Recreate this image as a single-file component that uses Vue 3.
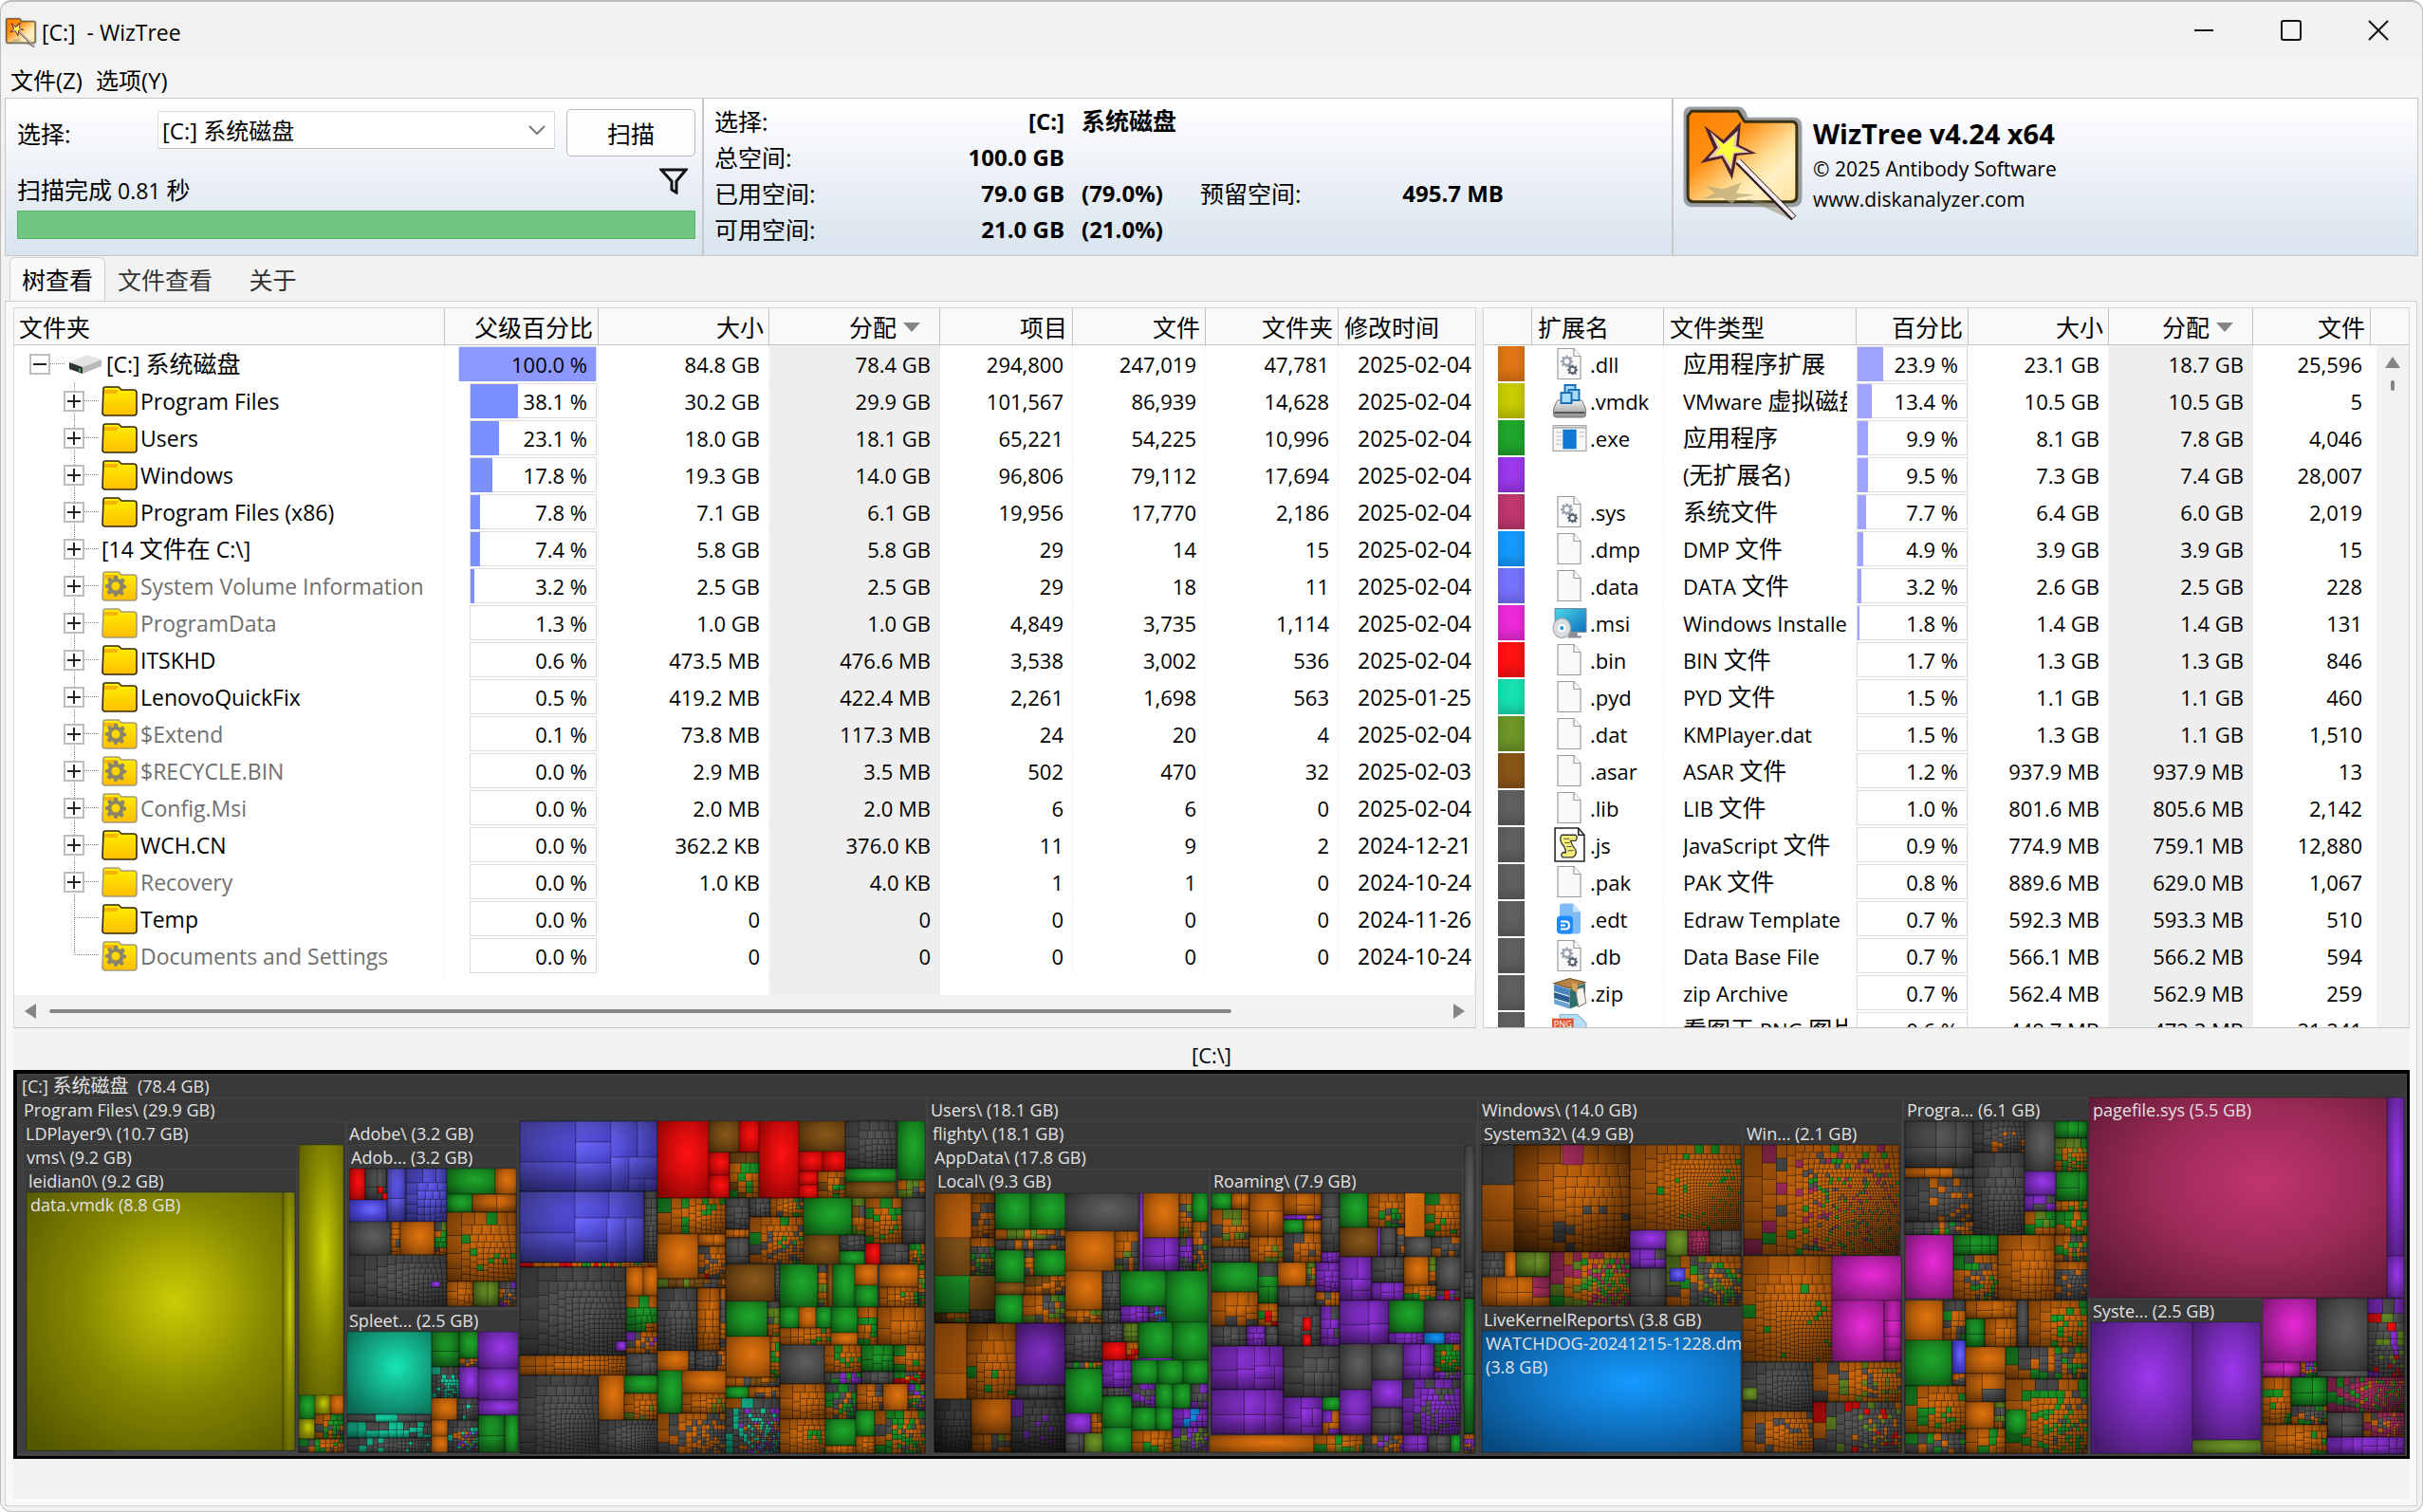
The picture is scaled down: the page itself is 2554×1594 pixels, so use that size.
<script setup>
import { ref, h } from 'vue'

const drive = ref('C')
const activeTab = ref('树查看')
const tabs = ['树查看', '文件查看', '关于']

// Chinese runs are set a little larger than the latin text around them
const Mixed = ({ text }) =>
  text.split(/([\u4e00-\u9fff]+)/).map((part, i) => (i % 2 ? h('span', { class: 'zh' }, part) : part))
Mixed.props = ['text']

const folders = [
  { name: '[C:] 系统磁盘', icon: 'drive', open: true, root: true, pct: 100.0, size: '84.8 GB', alloc: '78.4 GB', items: '294,800', files: '247,019', dirs: '47,781', date: '2025-02-04' },
  { name: 'Program Files', icon: 'folder', pct: 38.1, size: '30.2 GB', alloc: '29.9 GB', items: '101,567', files: '86,939', dirs: '14,628', date: '2025-02-04' },
  { name: 'Users', icon: 'folder', pct: 23.1, size: '18.0 GB', alloc: '18.1 GB', items: '65,221', files: '54,225', dirs: '10,996', date: '2025-02-04' },
  { name: 'Windows', icon: 'folder', pct: 17.8, size: '19.3 GB', alloc: '14.0 GB', items: '96,806', files: '79,112', dirs: '17,694', date: '2025-02-04' },
  { name: 'Program Files (x86)', icon: 'folder', pct: 7.8, size: '7.1 GB', alloc: '6.1 GB', items: '19,956', files: '17,770', dirs: '2,186', date: '2025-02-04' },
  { name: '[14 文件在 C:\\]', icon: '', pct: 7.4, size: '5.8 GB', alloc: '5.8 GB', items: '29', files: '14', dirs: '15', date: '2025-02-04' },
  { name: 'System Volume Information', icon: 'gear', hidden: true, pct: 3.2, size: '2.5 GB', alloc: '2.5 GB', items: '29', files: '18', dirs: '11', date: '2025-02-04' },
  { name: 'ProgramData', icon: 'folder', hidden: true, pct: 1.3, size: '1.0 GB', alloc: '1.0 GB', items: '4,849', files: '3,735', dirs: '1,114', date: '2025-02-04' },
  { name: 'ITSKHD', icon: 'folder', pct: 0.6, size: '473.5 MB', alloc: '476.6 MB', items: '3,538', files: '3,002', dirs: '536', date: '2025-02-04' },
  { name: 'LenovoQuickFix', icon: 'folder', pct: 0.5, size: '419.2 MB', alloc: '422.4 MB', items: '2,261', files: '1,698', dirs: '563', date: '2025-01-25' },
  { name: '$Extend', icon: 'gear', hidden: true, pct: 0.1, size: '73.8 MB', alloc: '117.3 MB', items: '24', files: '20', dirs: '4', date: '2025-02-04' },
  { name: '$RECYCLE.BIN', icon: 'gear', hidden: true, pct: 0, size: '2.9 MB', alloc: '3.5 MB', items: '502', files: '470', dirs: '32', date: '2025-02-03' },
  { name: 'Config.Msi', icon: 'gear', hidden: true, pct: 0, size: '2.0 MB', alloc: '2.0 MB', items: '6', files: '6', dirs: '0', date: '2025-02-04' },
  { name: 'WCH.CN', icon: 'folder', pct: 0, size: '362.2 KB', alloc: '376.0 KB', items: '11', files: '9', dirs: '2', date: '2024-12-21' },
  { name: 'Recovery', icon: 'folder', hidden: true, pct: 0, size: '1.0 KB', alloc: '4.0 KB', items: '1', files: '1', dirs: '0', date: '2024-10-24' },
  { name: 'Temp', icon: 'folder', leaf: true, pct: 0, size: '0', alloc: '0', items: '0', files: '0', dirs: '0', date: '2024-11-26' },
  { name: 'Documents and Settings', icon: 'gear', hidden: true, leaf: true, last: true, pct: 0, size: '0', alloc: '0', items: '0', files: '0', dirs: '0', date: '2024-10-24' }
]

const types = [
  { color: 'o', icon: 'cogs', ext: '.dll', type: '应用程序扩展', pct: 23.9, size: '23.1 GB', alloc: '18.7 GB', files: '25,596' },
  { color: 'y', icon: 'vmdk', ext: '.vmdk', type: 'VMware 虚拟磁盘', pct: 13.4, size: '10.5 GB', alloc: '10.5 GB', files: '5' },
  { color: 'g', icon: 'exe', ext: '.exe', type: '应用程序', pct: 9.9, size: '8.1 GB', alloc: '7.8 GB', files: '4,046' },
  { color: 'p', icon: '', ext: '', type: '(无扩展名)', pct: 9.5, size: '7.3 GB', alloc: '7.4 GB', files: '28,007' },
  { color: 'c', icon: 'cogs', ext: '.sys', type: '系统文件', pct: 7.7, size: '6.4 GB', alloc: '6.0 GB', files: '2,019' },
  { color: 'b', icon: 'doc', ext: '.dmp', type: 'DMP 文件', pct: 4.9, size: '3.9 GB', alloc: '3.9 GB', files: '15' },
  { color: 'd', icon: 'doc', ext: '.data', type: 'DATA 文件', pct: 3.2, size: '2.6 GB', alloc: '2.5 GB', files: '228' },
  { color: 'm', icon: 'msi', ext: '.msi', type: 'Windows Installer', pct: 1.8, size: '1.4 GB', alloc: '1.4 GB', files: '131' },
  { color: 'r', icon: 'doc', ext: '.bin', type: 'BIN 文件', pct: 1.7, size: '1.3 GB', alloc: '1.3 GB', files: '846' },
  { color: 't', icon: 'doc', ext: '.pyd', type: 'PYD 文件', pct: 1.5, size: '1.1 GB', alloc: '1.1 GB', files: '460' },
  { color: 'l', icon: 'doc', ext: '.dat', type: 'KMPlayer.dat', pct: 1.5, size: '1.3 GB', alloc: '1.1 GB', files: '1,510' },
  { color: 'n', icon: 'doc', ext: '.asar', type: 'ASAR 文件', pct: 1.2, size: '937.9 MB', alloc: '937.9 MB', files: '13' },
  { color: 'k', icon: 'doc', ext: '.lib', type: 'LIB 文件', pct: 1.0, size: '801.6 MB', alloc: '805.6 MB', files: '2,142' },
  { color: 'k', icon: 'js', ext: '.js', type: 'JavaScript 文件', pct: 0.9, size: '774.9 MB', alloc: '759.1 MB', files: '12,880' },
  { color: 'k', icon: 'doc', ext: '.pak', type: 'PAK 文件', pct: 0.8, size: '889.6 MB', alloc: '629.0 MB', files: '1,067' },
  { color: 'k', icon: 'edt', ext: '.edt', type: 'Edraw Template', pct: 0.7, size: '592.3 MB', alloc: '593.3 MB', files: '510' },
  { color: 'k', icon: 'cogs', ext: '.db', type: 'Data Base File', pct: 0.7, size: '566.1 MB', alloc: '566.2 MB', files: '594' },
  { color: 'k', icon: 'zip', ext: '.zip', type: 'zip Archive', pct: 0.7, size: '562.4 MB', alloc: '562.9 MB', files: '259' },
  { color: 'k', icon: 'png', ext: '.png', type: '看图王 PNG 图片', pct: 0.6, size: '448.7 MB', alloc: '472.3 MB', files: '21,241' }
]

const barWidth = (pct) => (pct < 1.8 ? 0 : pct) + '%'

// ---- treemap ----
// colour key: [bright centre, middle, edge]
const colors = {
  y: ['#c9cd04', '#858700', '#565800'],
  o: ['#e0740f', '#b65c0a', '#703a06'],
  g: ['#1fa82b', '#178421', '#0b4c11'],
  p: ['#9c37ee', '#7229b0', '#45196b'],
  c: ['#c0356c', '#9a2a57', '#5c1933'],
  b: ['#149aff', '#0f74c4', '#084a80'],
  d: ['#6f6aff', '#4641cc', '#2d2a86'],
  m: ['#ea2ad8', '#b01fa3', '#711568'],
  r: ['#ff1212', '#cc0a0a', '#830404'],
  t: ['#18e6b4', '#12a582', '#0a6450'],
  l: ['#6e9727', '#58791f', '#374c13'],
  n: ['#8a581a', '#6c4412', '#43290a'],
  k: ['#606060', '#484848', '#2a2a2a']
}

// one file: [colour, x, y, w, h]; many files: [colour mix, x, y, w, h, count]
// a count of 0 is a file lit by the cushion of its folder, an empty mix is that cushion
const blocks = [
  // Program Files / LDPlayer9
  ['y', 14, 129, 270, 272], ['y', 284, 129, 13, 272], ['y', 301, 79, 47, 264],
  ['g', 301, 343, 17, 25], ['y', 318, 343, 16, 20], ['o', 334, 343, 14, 20], ['y', 301, 368, 17, 21],
  ['ooggk', 318, 363, 30, 26, 24], ['oookg', 301, 389, 47, 14, 24],
  // Adobe
  ['r', 354, 104, 17, 33], ['k', 371, 104, 23, 33, 4], ['r', 384, 123, 6, 7], ['r', 389, 130, 5, 7], ['d', 354, 137, 40, 23], ['d', 394, 104, 20, 56, 2],
  ['d', 414, 104, 43, 56, 30], ['k', 354, 160, 44, 36], ['oook', 398, 160, 10, 36, 8], ['o', 408, 160, 36, 35],
  ['oklg', 444, 160, 13, 35, 14], ['k', 354, 195, 103, 54, 110], ['p', 440, 223, 10, 6],
  ['g', 457, 104, 51, 27], ['o', 508, 104, 22, 27], ['g', 457, 131, 27, 19], ['o', 484, 131, 46, 19, 2],
  ['ooooooooooooooooooog', 457, 150, 73, 73, 90], ['o', 457, 223, 28, 26, 12], ['l', 485, 223, 27, 26, 2], ['kkkop', 512, 223, 18, 26, 24],
  // Spleeter
  ['t', 352, 276, 89, 87], ['kt', 352, 363, 89, 9, 4], ['ttttk', 352, 371, 89, 17, 22], ['kkkkkkkt', 352, 388, 89, 15, 70],
  ['g', 441, 276, 29, 37, 2], ['g', 470, 276, 20, 28], ['ook', 470, 304, 20, 9, 10], ['p', 490, 276, 42, 39],
  ['tttkk', 441, 313, 29, 33, 60], ['p', 470, 313, 20, 33], ['p', 490, 315, 42, 33], ['p', 490, 348, 42, 16],
  ['g', 490, 364, 28, 39, 2], ['g', 518, 364, 14, 39], ['o', 441, 346, 27, 23], ['o', 441, 369, 17, 17],
  ['o', 441, 386, 17, 17], ['kkkktop', 458, 369, 32, 34, 70], ['kkkt', 468, 346, 22, 23, 24],
  // remaining Program Files
  ['d', 534, 54, 59, 43, 0], ['d', 534, 97, 59, 31, 0], ['d', 593, 54, 37, 22, 0], ['d', 593, 76, 37, 22, 0], ['d', 593, 98, 37, 30, 0],
  ['d', 630, 54, 28, 38, 0], ['d', 658, 54, 21, 38, 0], ['d', 630, 92, 19, 36, 0], ['d', 649, 92, 30, 23, 0], ['d', 649, 115, 17, 13, 0],
  ['d', 666, 115, 13, 13, 0], ['d', 534, 128, 58, 44, 0], ['d', 534, 172, 58, 31, 0], ['d', 592, 128, 36, 28, 0], ['d', 592, 156, 34, 25, 0],
  ['d', 592, 181, 34, 22, 0], ['d', 628, 128, 37, 28, 0], ['d', 626, 156, 20, 47, 0], ['d', 646, 156, 19, 47, 0],
  ['', 534, 54, 145, 74], ['', 534, 128, 131, 75], ['k', 665, 128, 14, 75, 40],
  ['oooorg', 534, 203, 145, 5, 40], ['k', 534, 208, 112, 93, 180], ['p', 635, 286, 11, 10],
  ['o', 646, 208, 18, 30], ['o', 664, 208, 15, 30], ['gggo', 646, 238, 33, 38, 18], ['oookp', 646, 276, 33, 23, 24],
  ['o', 534, 301, 112, 21, 60], ['k', 646, 299, 33, 23, 5], ['k', 534, 322, 83, 82, 160], ['o', 617, 322, 27, 47],
  ['g', 644, 322, 35, 19], ['ooool', 644, 341, 35, 28, 24], ['k', 617, 369, 62, 35, 110],
  ['r', 679, 54, 54, 81], ['n', 733, 54, 32, 33], ['r', 765, 54, 21, 33], ['r', 733, 87, 22, 24], ['r', 733, 111, 22, 24],
  ['ooonng', 755, 87, 31, 48, 20], ['r', 786, 54, 42, 81], ['n', 828, 54, 49, 32], ['r', 828, 86, 25, 21], ['r', 853, 86, 24, 21],
  ['r', 828, 107, 20, 14], ['r', 828, 121, 20, 14], ['oong', 848, 107, 29, 28, 16],
  ['k', 877, 54, 54, 50, 50], ['g', 877, 104, 53, 14], ['n', 877, 118, 53, 17], ['g', 932, 54, 29, 62], ['oolk', 932, 116, 29, 19, 10],
  ['oooooooog', 679, 135, 72, 38, 60], ['o', 679, 173, 43, 47], ['o', 722, 173, 29, 13, 2], ['ooookkr', 722, 186, 29, 34, 40],
  ['lokn', 679, 220, 72, 10, 14], ['k', 751, 135, 25, 33, 14], ['o', 751, 168, 25, 9, 4], ['k', 751, 177, 25, 27, 3],
  ['k', 776, 135, 22, 20, 12], ['ooooookg', 798, 135, 35, 20, 30], ['ooooookkg', 776, 155, 57, 49, 90],
  ['g', 833, 135, 51, 39], ['n', 833, 174, 38, 31], ['ooknl', 884, 135, 14, 39, 8], ['k', 871, 174, 27, 17, 12], ['g', 871, 191, 26, 14],
  ['ooooooog', 898, 135, 39, 48, 46], ['r', 898, 183, 16, 22], ['k', 914, 183, 30, 22, 5], ['k', 937, 135, 24, 48, 5], ['ooookg', 944, 183, 17, 22, 20],
  ['n', 751, 205, 52, 39], ['k', 803, 205, 5, 39, 14], ['g', 808, 205, 40, 45], ['olko', 848, 205, 10, 45, 10], ['n', 858, 205, 6, 45],
  ['g', 864, 205, 23, 45], ['o', 887, 205, 24, 22], ['g', 887, 227, 24, 23], ['o', 913, 205, 41, 24], ['ooooog', 913, 229, 41, 21, 26],
  ['olkg', 954, 205, 7, 45, 20], ['g', 751, 244, 44, 37], ['olko', 795, 244, 13, 37, 10], ['g', 808, 250, 20, 22],
  ['o', 828, 250, 18, 22], ['g', 846, 250, 16, 22], ['oooog', 808, 272, 54, 18, 24], ['g', 862, 250, 28, 27], ['o', 862, 277, 28, 13],
  ['ooog', 890, 250, 21, 40, 14], ['oooooog', 911, 250, 50, 40, 14], ['o', 751, 281, 47, 43], ['ooog', 798, 281, 10, 43, 16],
  ['k', 808, 290, 47, 41], ['oooog', 855, 290, 39, 29, 30], ['g', 894, 290, 34, 28, 9], ['oooog', 928, 290, 33, 28, 14],
  ['kpgk', 855, 319, 39, 12, 12], ['k', 894, 318, 34, 13, 5], ['okgr', 928, 318, 33, 13, 24],
  ['k', 679, 230, 42, 66, 60], ['o', 721, 230, 24, 66, 26], ['ko', 745, 230, 6, 66, 10], ['o', 679, 296, 33, 21], ['gk', 712, 296, 7, 21, 5],
  ['k', 719, 296, 23, 21, 14], ['oko', 742, 296, 9, 21, 8], ['g', 679, 317, 26, 45], ['o', 705, 317, 46, 24], ['ooool', 705, 341, 46, 21, 24],
  ['ookkko', 679, 362, 72, 42, 90], ['lnok', 751, 324, 57, 10, 10], ['g', 751, 334, 24, 12], ['ook', 775, 334, 33, 12, 8],
  ['kkkkkttkpo', 751, 346, 57, 58, 220], ['o', 808, 331, 48, 37, 26], ['kgok', 856, 331, 33, 37, 36], ['ook', 889, 331, 28, 28, 14],
  ['o', 917, 331, 26, 28], ['gokp', 943, 331, 18, 28, 30], ['ooog', 808, 368, 48, 36, 50], ['g', 856, 368, 32, 28], ['o', 856, 396, 32, 8, 8],
  ['g', 888, 359, 20, 27], ['gggooko', 908, 359, 53, 45, 80], ['o', 888, 386, 20, 18, 9],
  // Users / Local
  ['o', 971, 130, 39, 47, 0], ['ooook', 1010, 130, 25, 47, 22], ['n', 971, 177, 38, 40, 0], ['oklkg', 1009, 177, 26, 40, 40],
  ['g', 971, 217, 37, 39, 0], ['n', 1008, 217, 27, 36, 0], ['oonl', 971, 256, 38, 11, 10], ['k', 1008, 253, 27, 14, 10],
  ['', 971, 130, 64, 137],
  ['g', 1035, 130, 37, 38], ['g', 1072, 130, 37, 38], ['oolk', 1035, 168, 74, 11, 12], ['kkko', 1035, 179, 74, 11, 14],
  ['g', 1035, 190, 31, 34], ['ook', 1066, 190, 10, 27, 5], ['g', 1076, 190, 33, 27], ['n', 1035, 224, 31, 13], ['ookn', 1066, 217, 43, 20, 16],
  ['g', 1035, 237, 29, 30], ['oolkg', 1064, 237, 45, 30, 24], ['k', 1109, 130, 77, 40], ['o', 1109, 170, 52, 42], ['oolk', 1161, 170, 25, 42, 16],
  ['p', 1187, 130, 4, 82], ['o', 1191, 130, 38, 47], ['oolk', 1229, 130, 14, 47, 18], ['g', 1243, 130, 16, 30], ['oogk', 1243, 160, 16, 52, 30],
  ['p', 1191, 177, 38, 35, 4], ['pk', 1229, 177, 14, 35, 18], ['o', 1109, 212, 39, 41], ['k', 1148, 212, 19, 41, 12],
  ['g', 1167, 212, 48, 37], ['g', 1215, 212, 44, 54], ['p', 1167, 249, 30, 17, 10], ['kkpb', 1197, 249, 18, 17, 18],
  ['oonl', 1109, 253, 39, 14, 12], ['k', 1148, 253, 19, 14, 9], ['o', 971, 267, 34, 53, 0], ['o', 971, 320, 34, 27, 0],
  ['ooooooooooog', 1005, 267, 52, 80, 44], ['p', 1057, 267, 52, 65], ['k', 1057, 332, 52, 15, 6],
  ['k', 971, 347, 39, 56, 50], ['o', 1010, 347, 42, 37], ['lok', 1010, 384, 42, 19, 12], ['kkkkkkkp', 1052, 347, 57, 56, 80],
  ['', 971, 267, 138, 136],
  ['k', 1109, 267, 39, 41, 26], ['gok', 1109, 308, 39, 7, 8], ['g', 1109, 315, 39, 47], ['p', 1109, 362, 27, 21], ['oon', 1136, 362, 12, 21, 6],
  ['k', 1109, 383, 20, 20, 3], ['l', 1129, 383, 19, 20], ['k', 1148, 267, 22, 20, 9], ['l', 1170, 267, 16, 20, 6], ['g', 1186, 266, 36, 38],
  ['g', 1222, 266, 37, 40], ['r', 1148, 287, 25, 19], ['rko', 1173, 287, 13, 19, 8], ['p', 1186, 304, 36, 2], ['p', 1148, 306, 31, 29, 8],
  ['g', 1179, 306, 27, 25], ['g', 1206, 306, 27, 25], ['g', 1233, 306, 26, 25], ['kpk', 1148, 335, 31, 9, 12],
  ['g', 1148, 344, 31, 33], ['g', 1148, 377, 31, 26], ['kkp', 1179, 331, 25, 25, 16], ['g', 1204, 331, 18, 26], ['g', 1222, 331, 19, 26],
  ['kkp', 1241, 331, 18, 26, 8], ['g', 1179, 356, 25, 24], ['g', 1204, 356, 18, 24], ['pppbk', 1222, 357, 37, 20, 12],
  ['oog', 1179, 380, 43, 23, 14], ['kkpl', 1222, 377, 37, 26, 40],
  // Users / Roaming
  ['g', 1263, 130, 21, 17], ['o', 1284, 130, 19, 17, 2], ['ooookl', 1263, 147, 40, 40, 24], ['o', 1303, 130, 36, 46, 3],
  ['ooool', 1303, 176, 36, 27, 16], ['k', 1263, 187, 40, 16, 10], ['o', 1339, 130, 40, 23, 4], ['pop', 1339, 153, 40, 5, 4], ['g', 1339, 158, 21, 14],
  ['o', 1360, 158, 19, 14, 2], ['ooook', 1339, 172, 40, 31, 16], ['k', 1379, 130, 19, 62, 7], ['p', 1379, 192, 19, 11, 9],
  ['g', 1263, 203, 49, 31], ['gkg', 1312, 203, 21, 43, 4], ['o', 1333, 203, 30, 25], ['olk', 1363, 203, 10, 25, 8], ['p', 1373, 203, 25, 31, 14],
  ['oooook', 1263, 234, 49, 36, 12], ['ooogr', 1312, 246, 21, 24, 10], ['k', 1333, 228, 40, 21, 5], ['oook', 1373, 234, 25, 15, 8],
  ['k', 1333, 249, 45, 42, 16], ['r', 1359, 261, 9, 14], ['r', 1359, 279, 9, 12], ['pppk', 1378, 249, 20, 42, 10],
  ['k', 1263, 270, 37, 21, 10], ['p', 1300, 270, 20, 21, 9], ['k', 1320, 270, 13, 21, 3], ['p', 1263, 291, 76, 46, 9],
  ['p', 1263, 337, 76, 47, 6], ['k', 1339, 291, 59, 54, 16], ['p', 1339, 345, 41, 39, 6], ['g', 1380, 345, 18, 14], ['ogp', 1380, 359, 18, 25, 5],
  ['g', 1398, 130, 30, 36], ['oookg', 1428, 130, 39, 36, 24], ['n', 1398, 166, 40, 31], ['p', 1438, 166, 3, 31], ['k', 1441, 166, 17, 31, 2],
  ['ook', 1458, 166, 9, 31, 6], ['o', 1467, 130, 21, 46, 0], ['oooog', 1488, 130, 37, 46, 30], ['k', 1467, 176, 28, 21], ['kko', 1495, 176, 30, 21, 10],
  ['p', 1398, 197, 34, 46, 5], ['k', 1432, 197, 34, 27, 7], ['p', 1432, 224, 34, 19, 5], ['o', 1466, 197, 26, 30], ['lok', 1492, 197, 8, 30, 5],
  ['ooog', 1466, 227, 34, 16, 14], ['k', 1500, 197, 25, 35], ['krkp', 1500, 232, 25, 11, 10], ['p', 1398, 243, 52, 46, 4],
  ['g', 1450, 243, 37, 34], ['k', 1487, 243, 38, 34], ['p', 1450, 277, 37, 12, 10], ['b', 1487, 277, 22, 12], ['p', 1509, 277, 16, 12, 10],
  ['k', 1398, 289, 34, 48], ['k', 1432, 289, 33, 38], ['p', 1465, 289, 33, 37, 4], ['gggo', 1498, 289, 27, 29, 36],
  ['kp', 1498, 318, 27, 8, 12], ['pppkkp', 1464, 326, 61, 58, 110], ['p', 1398, 337, 34, 47, 2], ['p', 1432, 327, 32, 29], ['k', 1432, 356, 32, 28, 4],
  ['o', 1261, 385, 110, 18], ['oolog', 1371, 385, 52, 18, 16], ['pko', 1423, 385, 42, 18, 24], ['p', 1465, 385, 26, 18, 4],
  ['k', 1491, 385, 24, 18, 3], ['g', 1515, 385, 10, 18], ['k', 1529, 80, 11, 133], ['k', 1529, 213, 11, 28, 7], ['g', 1529, 241, 11, 142, 2], ['pko', 1529, 384, 11, 20, 16],
  // Windows
  ['k', 1548, 79, 34, 42, 0], ['o', 1548, 121, 34, 38, 0], ['o', 1548, 159, 34, 33, 0], ['oooooooooook', 1582, 79, 122, 113, 100], ['c', 1633, 79, 22, 21, 0],
  ['', 1548, 79, 156, 113],
  ['oooooooooooooog', 1704, 79, 117, 90, 600], ['p', 1704, 169, 38, 20], ['ppk', 1704, 189, 38, 20, 5], ['l', 1742, 169, 23, 27],
  ['c', 1765, 169, 23, 27, 30], ['k', 1788, 169, 33, 27, 8], ['k', 1548, 192, 24, 36, 18], ['o', 1572, 192, 12, 36], ['l', 1584, 192, 36, 26, 2],
  ['ooooc', 1548, 218, 72, 31, 8], ['oclgoc', 1620, 192, 84, 57, 170], ['kkolgo', 1742, 196, 79, 53, 120], ['k', 1704, 209, 38, 40, 3], ['d', 1746, 209, 16, 14],
  ['b', 1548, 275, 273, 128], ['oooooooooogck', 1824, 79, 164, 116, 1100],
  ['ooooooooooooooooog', 1823, 196, 94, 112, 260], ['m', 1917, 196, 73, 47], ['m', 1917, 243, 55, 64], ['m', 1972, 243, 18, 64, 4],
  ['k', 1823, 308, 74, 52, 110], ['l', 1823, 335, 15, 13], ['oooookl', 1897, 308, 93, 42, 100], ['kkkkkorl', 1897, 350, 93, 53, 140], ['ooooook', 1823, 360, 74, 43, 80],
  // Program Files (x86)
  ['k', 1994, 54, 72, 49, 6], ['oko', 1994, 103, 72, 11, 5], ['kkkkkkko', 1994, 114, 72, 46, 60], ['kokg', 1994, 160, 72, 14, 26],
  ['kkkkko', 2066, 54, 54, 33, 60], ['kkkkkkk', 2066, 87, 54, 87, 90], ['k', 2120, 54, 32, 53], ['g', 2152, 54, 34, 18, 3],
  ['oolg', 2152, 72, 34, 35, 40], ['p', 2120, 107, 33, 25], ['ppk', 2120, 132, 33, 17, 5], ['g', 2153, 107, 33, 31, 3], ['oog', 2153, 138, 33, 11, 12],
  ['ooolg', 2120, 149, 33, 25, 10], ['ggoo', 2153, 149, 33, 25, 14], ['m', 1994, 174, 51, 67], ['g', 2045, 174, 47, 21, 8],
  ['oookg', 2045, 195, 47, 47, 60], ['o', 2092, 174, 60, 68, 40], ['okgo', 2152, 174, 34, 28, 30], ['kkkko', 2152, 202, 34, 40, 50],
  ['o', 1994, 243, 40, 42], ['kogo', 2034, 243, 24, 42, 16], ['g', 1994, 285, 49, 48], ['d', 2044, 285, 14, 35], ['oko', 2044, 320, 14, 13, 5],
  ['ooooog', 1994, 333, 64, 50, 60], ['gkko', 1994, 383, 64, 21, 24], ['g', 2058, 262, 20, 30, 2], ['o', 2058, 243, 54, 19, 8],
  ['o', 2078, 262, 34, 30, 10], ['k', 2112, 243, 12, 49, 2], ['oooooog', 2124, 243, 62, 49, 60], ['o', 2058, 292, 42, 28], ['kooo', 2058, 320, 42, 30, 3],
  ['kkoog', 2100, 292, 86, 34, 50], ['o', 2058, 350, 30, 28], ['olk', 2088, 350, 12, 28, 8], ['ooog', 2058, 378, 42, 26, 12],
  ['oogokg', 2100, 326, 86, 78, 170], ['g', 2100, 358, 22, 26],
  // files in C:\ and System Volume Information
  ['c', 2188, 29, 314, 211], ['p', 2502, 29, 18, 167], ['p', 2502, 196, 18, 44], ['p', 2190, 266, 107, 138], ['p', 2297, 266, 72, 124], ['l', 2297, 390, 72, 14],
  ['m', 2371, 241, 57, 67], ['m', 2371, 308, 40, 16, 2], ['gpo', 2411, 308, 17, 16, 20], ['k', 2428, 241, 54, 76], ['k', 2428, 317, 54, 7],
  ['kkkkkkrlp', 2482, 241, 38, 83, 70], ['ooog', 2371, 324, 30, 49, 30], ['g', 2401, 324, 38, 30, 4], ['kkog', 2401, 354, 38, 20, 30],
  ['ccccogk', 2439, 324, 81, 37, 260], ['k', 2439, 361, 38, 26, 3], ['ccko', 2477, 361, 43, 26, 60], ['ooooog', 2371, 374, 68, 31, 30], ['p', 2439, 387, 81, 18, 10]
]

let seed = 7
function random() {
  seed = (seed * 16807) % 2147483647
  return seed / 2147483647
}

// worst aspect ratio of a row of areas laid along a side
function worst(row, sum, side) {
  const s2 = sum * sum
  return Math.max((side * side * row[0]) / s2, s2 / (side * side * row[row.length - 1]))
}

// squarified layout, biggest file first
function squarify(mix, x, y, w, h, count) {
  const sizes = Array.from({ length: count }, (_, i) => 1 / Math.pow(i + 3, 0.85))
  const total = sizes.reduce((a, b) => a + b, 0)
  const areas = sizes.map((s) => (s / total) * w * h)
  const out = []
  let i = 0
  while (i < areas.length) {
    const side = Math.min(w, h)
    const row = [areas[i]]
    let sum = areas[i++]
    while (i < areas.length) {
      const next = [...row, areas[i]]
      if (worst(next, sum + areas[i], side) > worst(row, sum, side)) break
      row.push(areas[i])
      sum += areas[i++]
    }
    const depth = sum / side
    let pos = 0
    for (const a of row) {
      const len = a / depth
      const c = 'flat-' + mix[Math.floor(random() * mix.length)]
      out.push(w >= h ? { c, x, y: y + pos, w: depth, h: len } : { c, x: x + pos, y, w: len, h: depth })
      pos += len
    }
    if (w >= h) {
      x += depth
      w -= depth
    } else {
      y += depth
      h -= depth
    }
  }
  return out
}

const tiles = []
for (const [mix, x, y, w, h, count] of blocks) {
  if (!mix) {
    tiles.push({ c: 'cushion', x, y, w, h })
  } else if (count) {
    tiles.push(...squarify(mix, x, y, w, h, count))
    tiles.push({ c: 'cushion', x, y, w, h })
  } else {
    tiles.push({ c: (count === 0 ? 'flat-' : 'tile-') + mix, x, y, w, h })
  }
}

// folder frames behind the tiles
const frames = [
  [4, 4, 2518, 402], [6, 29, 956, 376], [8, 54, 342, 350], [10, 79, 289, 324], [12, 104, 286, 298],
  [351, 54, 182, 197], [353, 79, 178, 171], [351, 252, 182, 152],
  [963, 29, 580, 376], [965, 54, 577, 350], [967, 79, 561, 325], [969, 104, 291, 299], [1261, 104, 266, 280],
  [1544, 29, 447, 376], [1546, 54, 276, 196], [1822, 54, 168, 142], [1546, 250, 276, 154], [1992, 29, 195, 376], [2188, 241, 182, 164]
]

const labels = [
  ['[C:] 系统磁盘  (78.4 GB)', 9, 24], ['Program Files\\ (29.9 GB)', 11, 49], ['LDPlayer9\\ (10.7 GB)', 13, 74],
  ['vms\\ (9.2 GB)', 14, 99], ['leidian0\\ (9.2 GB)', 16, 124], ['data.vmdk (8.8 GB)', 18, 149],
  ['Adobe\\ (3.2 GB)', 354, 74], ['Adob... (3.2 GB)', 356, 99], ['Spleet... (2.5 GB)', 354, 271],
  ['Users\\ (18.1 GB)', 967, 49], ['flighty\\ (18.1 GB)', 969, 74], ['AppData\\ (17.8 GB)', 971, 99],
  ['Local\\ (9.3 GB)', 974, 124], ['Roaming\\ (7.9 GB)', 1265, 124],
  ['Windows\\ (14.0 GB)', 1548, 49], ['System32\\ (4.9 GB)', 1550, 74], ['Win... (2.1 GB)', 1827, 74],
  ['LiveKernelReports\\ (3.8 GB)', 1550, 270], ['WATCHDOG-20241215-1228.dm', 1552, 295], ['(3.8 GB)', 1552, 320],
  ['Progra... (6.1 GB)', 1996, 49], ['pagefile.sys (5.5 GB)', 2192, 49], ['Syste... (2.5 GB)', 2192, 261]
]
const labelParts = (text) => text.split(/([\u4e00-\u9fff]+)/)
</script>

<template>
  <div class="window">
    <!-- shared shapes -->
    <svg class="defs" aria-hidden="true">
      <defs>
        <linearGradient id="folderFill" x1="0" y1="0" x2="0" y2="1">
          <stop offset="0" stop-color="#fff000" />
          <stop offset="1" stop-color="#ffbe00" />
        </linearGradient>
        <linearGradient id="logoFill" x1="0" y1="0" x2="1" y2="1">
          <stop offset="0" stop-color="#ff8000" />
          <stop offset="0.35" stop-color="#ff9014" />
          <stop offset="0.62" stop-color="#ffe09a" />
          <stop offset="0.75" stop-color="#fff1c4" />
          <stop offset="1" stop-color="#ffdf9a" />
        </linearGradient>
        <linearGradient id="screenFill" x1="0" y1="0" x2="1" y2="1">
          <stop offset="0" stop-color="#4fd6e6" />
          <stop offset="1" stop-color="#0a6fc0" />
        </linearGradient>
        <linearGradient id="metalFill" x1="0" y1="0" x2="0" y2="1">
          <stop offset="0" stop-color="#f2f2f2" />
          <stop offset="1" stop-color="#8d8d8d" />
        </linearGradient>
        <symbol id="logo" viewBox="0 0 126 120">
          <path d="M8 5 H58 Q63 5 65 12 L67 16 H116 Q122 16 122 23 V97 Q122 104 115 104 H11 Q4 104 4 97 V11 Q4 5 8 5Z" fill="#6c7174" stroke="#9a9ea1" stroke-width="5" />
          <path d="M10 7 H58 L65 18 H114 Q119 18 119 24 V95 Q119 101 113 101 H12 Q6 101 6 95 V12Z" fill="url(#logoFill)" stroke="#3a3112" stroke-width="3" />
          <path d="M24 84 L42 88 L62 81 L56 92 L76 94 L58 97 L52 103 L42 97 L22 98 L34 92Z" fill="#b7a577" opacity="0.7" />
          <path d="M66 98 L112 119 L104 104Z" fill="#8f8566" opacity="0.5" />
          <path d="M58 59 L116 118" stroke="#2c1a22" stroke-width="7" />
          <path d="M58 58 L116 117" stroke="#f5ecee" stroke-width="4" />
          <path d="M23 22 L43 37 L61 18 L59 42 L77 51 L57 53 L52 78 L41 56 L19 61 L33 46Z" fill="#4a2430" />
          <path d="M29 28 L43 41 L58 27 L56 43 L70 50 L54 51 L51 68 L42 53 L27 56 L37 45Z" fill="#eec7b4" />
          <path d="M34 34 L44 42 L55 32 L53 44 L64 49 L53 50 L50 62 L43 51 L33 53 L40 45Z" fill="#fbff3c" />
        </symbol>
        <symbol id="folder" viewBox="0 0 38 32">
          <path d="M2 3 Q2 1 4 1 H18 L21 4 H34 Q37 4 37 7 V28 Q37 31 34 31 H4 Q1 31 1 28Z" fill="url(#folderFill)" stroke="currentColor" stroke-width="1.6" />
          <path d="M3 4 H18 L16 8 H3Z" fill="#f5b400" />
        </symbol>
        <symbol id="gear" viewBox="0 0 22 22">
          <path d="M9 0h4l.6 3.2 2 .8 2.700-1.800 2.500 2.700-1.800 2.600.8 2L22 10v3l-3 .8-.8 2 1.700 2.600-2.600 2.500-2.600-1.800-2 .8L12.500 22h-3l-.8-3-2-.8-2.600 1.700-2.500-2.600 1.800-2.600-.8-2L0 12.500v-3l3-.8.8-2-1.700-2.600 2.600-2.500L7.200 4l1.600-.8zM11 6.500a4.500 4.500 0 1 0 0 9a4.500 4.500 0 1 0 0-9z" fill-rule="evenodd" fill="currentColor" />
        </symbol>
        <symbol id="page" viewBox="0 0 26 34">
          <path d="M1 1 H18 L25 9 V33 H1Z" fill="#fafafa" stroke="#9a9a9a" stroke-width="1.2" />
          <path d="M18 1 V9 H25" fill="#fff" stroke="#9a9a9a" stroke-width="1.2" />
        </symbol>
      </defs>
    </svg>

    <header class="titlebar">
      <svg class="app-icon"><use href="#logo" /></svg>
      <span class="title">[C:]&nbsp; - WizTree</span>
      <div class="controls">
        <button aria-label="最小化"><svg viewBox="0 0 22 22"><path d="M1 11h20" /></svg></button>
        <button aria-label="最大化"><svg viewBox="0 0 22 22"><rect x="1" y="1" width="20" height="20" rx="2" /></svg></button>
        <button aria-label="关闭"><svg viewBox="0 0 22 22"><path d="M1 1l20 20M21 1L1 21" /></svg></button>
      </div>
    </header>

    <nav class="menubar">
      <button>文件(Z)</button>
      <button>选项(Y)</button>
    </nav>

    <section class="toolbar">
      <div class="panel scan-panel">
        <div class="scan-row">
          <label for="drive">选择:</label>
          <div class="drive-box">
            <select id="drive" v-model="drive">
              <option value="C">[C:] 系统磁盘</option>
            </select>
            <svg viewBox="0 0 18 10"><path d="M1 1l8 8 8-8" /></svg>
          </div>
          <button class="scan">扫描</button>
        </div>
        <div class="status-row">
          <label for="progress"><Mixed text="扫描完成 0.81 秒" /></label>
          <button class="filter" aria-label="过滤">
            <svg viewBox="0 0 30 28"><path d="M2 2h26L18 14v12l-5-3v-9z" /></svg>
          </button>
        </div>
        <progress id="progress" value="100" max="100"></progress>
      </div>

      <div class="panel info-panel">
        <span>选择:</span><b>[C:]</b><b><Mixed text="系统磁盘" /></b><span></span><b></b>
        <span>总空间:</span><b>100.0 GB</b><b></b><span></span><b></b>
        <span>已用空间:</span><b>79.0 GB</b><b>(79.0%)</b><span>预留空间:</span><b>495.7 MB</b>
        <span>可用空间:</span><b>21.0 GB</b><b>(21.0%)</b><span></span><b></b>
      </div>

      <div class="panel about-panel">
        <svg class="logo"><use href="#logo" /></svg>
        <div>
          <h1>WizTree v4.24 x64</h1>
          <p>© 2025 Antibody Software</p>
          <a href="#">www.diskanalyzer.com</a>
        </div>
      </div>
    </section>

    <div class="tabs" role="tablist">
      <button v-for="tab in tabs" :key="tab" role="tab" :class="{ active: tab === activeTab }" :aria-selected="tab === activeTab" @click="activeTab = tab">{{ tab }}</button>
    </div>

    <main class="page">
      <div class="page-inner">
        <div class="tables">
          <!-- FOLDER TREE -->
          <section class="pane">
            <table class="tree">
              <colgroup>
                <col class="w-name" /><col class="w-pct" /><col class="w-size" /><col class="w-size" />
                <col class="w-num" /><col class="w-num" /><col class="w-num" /><col />
              </colgroup>
              <thead>
                <tr>
                  <th class="left">文件夹</th>
                  <th>父级百分比</th>
                  <th>大小</th>
                  <th class="sorted">分配<svg viewBox="0 0 18 10"><path d="M0 0h18l-9 10z" /></svg></th>
                  <th>项目</th>
                  <th>文件</th>
                  <th>文件夹</th>
                  <th class="left tight">修改时间</th>
                </tr>
              </thead>
              <tbody>
                <tr v-for="row in folders" :key="row.name">
                  <td class="name">
                    <div class="node" :class="{ root: row.root, hidden: row.hidden }">
                      <svg v-if="row.leaf" class="branch" viewBox="0 0 38 39">
                        <path class="guide" :d="row.last ? 'M11.5 0V18' : 'M11.5 0V39'" />
                        <path class="guide" d="M12 18.5H38" />
                      </svg>
                      <button v-else class="expander" :aria-expanded="!!row.open">
                        <svg class="branch" viewBox="0 0 38 39">
                          <path v-if="!row.root" class="guide" d="M11.500 0V39" />
                          <path class="guide" d="M22 19.500H38" />
                          <rect class="box" x="1" y="10" width="20" height="20" />
                          <path class="sign" d="M4 20H18" />
                          <path v-if="!row.open" class="sign" d="M11 13V27" />
                        </svg>
                      </button>
                      <svg v-if="row.icon === 'drive'" class="drive-icon" viewBox="0 0 34 20">
                        <path d="M0 8L19 0 34 5 14 13z" fill="#e4e4e4" />
                        <path d="M14 13L34 5v7L14 20z" fill="#b9b9b9" />
                        <path d="M0 8l14 5v7L0 15z" fill="#2e3330" />
                        <path d="M11 14.500v3.500" stroke="#3ddc58" stroke-width="1.500" />
                      </svg>
                      <span v-else-if="row.icon" class="folder-icon">
                        <svg class="folder"><use href="#folder" /></svg>
                        <svg v-if="row.icon === 'gear'" class="gear"><use href="#gear" /></svg>
                      </span>
                      <span><Mixed :text="row.name" /></span>
                    </div>
                  </td>
                  <td class="pct">
                    <div class="meter" :class="{ full: row.root }">
                      <i :style="{ width: barWidth(row.pct) }"></i>
                      <span>{{ row.pct.toFixed(1) }} %</span>
                    </div>
                  </td>
                  <td>{{ row.size }}</td>
                  <td class="sorted">{{ row.alloc }}</td>
                  <td>{{ row.items }}</td>
                  <td>{{ row.files }}</td>
                  <td>{{ row.dirs }}</td>
                  <td class="date">{{ row.date }}</td>
                </tr>
                <tr class="filler"><td colspan="3"></td><td class="sorted"></td><td colspan="4"></td></tr>
              </tbody>
            </table>
            <div class="hscroll">
              <svg viewBox="0 0 12 16"><path d="M12 0v16L0 8z" /></svg>
              <div class="track"><i></i></div>
              <svg viewBox="0 0 12 16"><path d="M0 0v16l12-8z" /></svg>
            </div>
          </section>

          <!-- FILE TYPES -->
          <section class="pane types-pane">
            <table class="types">
              <colgroup>
                <col class="w-color" /><col class="w-ext" /><col class="w-type" /><col class="w-share" />
                <col class="w-tsize" /><col class="w-talloc" /><col class="w-tfiles" /><col />
              </colgroup>
              <thead>
                <tr>
                  <th></th>
                  <th class="left tight">扩展名</th>
                  <th class="left tight">文件类型</th>
                  <th>百分比</th>
                  <th>大小</th>
                  <th class="sorted">分配<svg viewBox="0 0 18 10"><path d="M0 0h18l-9 10z" /></svg></th>
                  <th>文件</th>
                  <th></th>
                </tr>
              </thead>
              <tbody>
                <tr v-for="row in types" :key="row.type">
                  <td class="swatch"><div :class="'c-' + row.color"></div></td>
                  <td class="ext">
                    <div class="node">
                      <span class="type-icon">
                        <svg v-if="row.icon === 'doc'" class="sheet"><use href="#page" /></svg>
                        <svg v-else-if="row.icon === 'cogs'" class="sheet" viewBox="0 0 26 34">
                          <use href="#page" />
                          <use href="#gear" x="4" y="8" width="13" height="13" color="#9aa5b0" />
                          <use href="#gear" x="11" y="18" width="11" height="11" color="#59626b" />
                        </svg>
                        <svg v-else-if="row.icon === 'vmdk'" class="wide" viewBox="0 0 36 36">
                          <path d="M5 17h26l4 9v6q0 3-3 3H4q-3 0-3-3v-6z" fill="url(#metalFill)" stroke="#7b7b7b" />
                          <path d="M2 30h32" stroke="#555" stroke-width="2" />
                          <g fill="#a8dcfb" stroke="#1a6fb5" stroke-width="2"><rect x="13" y="1" width="11" height="11" /><rect x="17" y="6" width="11" height="11" /><rect x="9" y="9" width="11" height="11" /></g>
                        </svg>
                        <svg v-else-if="row.icon === 'exe'" class="wide" viewBox="0 0 36 28">
                          <rect x="1" y="1" width="34" height="26" fill="#f7f7f7" stroke="#9a9a9a" />
                          <path d="M1 3h34" stroke="#b5b5b5" stroke-width="2" />
                          <path d="M4 8h6M4 12h6M4 16h6M4 20h6M28 8h5M28 12h5" stroke="#b9c0c6" />
                          <rect x="11" y="5" width="14" height="20" fill="#0f78d4" />
                        </svg>
                        <svg v-else-if="row.icon === 'msi'" class="wide" viewBox="0 0 36 34">
                          <rect x="3" y="2" width="32" height="24" fill="url(#screenFill)" stroke="#6f8790" />
                          <path d="M18 26h8v4h4v2H16z" fill="#8b8f93" />
                          <ellipse cx="10" cy="22" rx="9" ry="10" fill="#d9dee2" stroke="#a2a9ae" />
                          <circle cx="10" cy="22" r="3" fill="#2f8fd4" stroke="#fff" stroke-width="2" />
                        </svg>
                        <svg v-else-if="row.icon === 'js'" class="script" viewBox="0 0 32 36">
                          <path d="M1 1h24l6 7v27H1z" fill="#fff" stroke="#222" stroke-width="1.500" />
                          <path d="M25 1v7h6" fill="none" stroke="#222" stroke-width="1.500" />
                          <path d="M8 8h14q3 3 0 6h-5q2 6 5 9 2 5-3 8H9q-3-2 0-5h3q0-5-4-9-3-6 0-9z" fill="#f5ee7a" stroke="#333" stroke-width="1.300" />
                          <path d="M10 12h6M11 16h5M13 20h5M14 24h6" stroke="#555" />
                        </svg>
                        <svg v-else-if="row.icon === 'edt'" class="sheet" viewBox="0 0 26 34">
                          <path d="M4 1h13l8 9v20q0 3-3 3H6q-3 0-3-3V4q0-3 3-3z" fill="#7fbcf7" />
                          <path d="M17 1v9h8z" fill="#c3e0fc" />
                          <rect x="0" y="14" width="17" height="19" rx="4" fill="#1f8bff" />
                          <path d="M4 20h5q4 0 4 4t-4 4H4M4 24h5" fill="none" stroke="#fff" stroke-width="2" />
                        </svg>
                        <svg v-else-if="row.icon === 'zip'" class="wide" viewBox="0 0 36 32">
                          <path d="M2 6L18 1l16 4-16 6z" fill="#b98545" stroke="#6b4a20" />
                          <path d="M2 7l16 5v7L2 14z" fill="#4a86c2" />
                          <path d="M2 15l16 5v6L2 21z" fill="#2d5f96" />
                          <path d="M2 22l16 5v5L2 27z" fill="#6aa3d2" />
                          <path d="M18 12l16-6v20l-16 6z" fill="#2f6f6a" />
                          <path d="M24 12l8-2 3 16-8 4z" fill="#f3f1ea" stroke="#7d7d7d" />
                          <path d="M20 5l6 2v8l-5-2z" fill="#d8a25a" />
                        </svg>
                        <svg v-else-if="row.icon === 'png'" class="wide" viewBox="0 0 36 34">
                          <path d="M8 1h18l9 9v24H8z" fill="#b8def5" stroke="#7db3d4" />
                          <rect x="0" y="5" width="22" height="11" fill="#e4572e" />
                          <text x="11" y="14" font-size="9" fill="#fff" text-anchor="middle">PNG</text>
                        </svg>
                      </span>
                      <span>{{ row.ext }}</span>
                    </div>
                  </td>
                  <td class="type"><div><Mixed :text="row.type" /></div></td>
                  <td class="share">
                    <div class="meter">
                      <i :style="{ width: barWidth(row.pct) }"></i>
                      <span>{{ row.pct.toFixed(1) }} %</span>
                    </div>
                  </td>
                  <td>{{ row.size }}</td>
                  <td class="sorted">{{ row.alloc }}</td>
                  <td>{{ row.files }}</td>
                  <td class="gutter"></td>
                </tr>
              </tbody>
            </table>
            <div class="vscroll">
              <svg viewBox="0 0 16 12"><path d="M8 0l8 12H0z" /></svg>
              <i></i>
              <svg viewBox="0 0 16 12"><path d="M0 0h16L8 12z" /></svg>
            </div>
          </section>
        </div>

        <!-- TREEMAP -->
        <p class="path">[C:\]</p>
        <svg class="treemap" viewBox="0 0 2526 410" role="img" aria-label="[C:\]">
          <defs>
            <radialGradient v-for="(c, key) in colors" :id="'tile-' + key" :key="key" cx="0.58" cy="0.42" r="0.75">
              <stop offset="0" :stop-color="c[0]" />
              <stop offset="0.5" :stop-color="c[1]" />
              <stop offset="1" :stop-color="c[2]" />
            </radialGradient>
            <linearGradient v-for="(c, key) in colors" :id="'flat-' + key" :key="'flat' + key" x1="0" y1="0" x2="1" y2="1">
              <stop offset="0" :stop-color="c[0]" />
              <stop offset="1" :stop-color="c[1]" />
            </linearGradient>
            <radialGradient id="cushion" cx="0.55" cy="0.4" r="0.8">
              <stop offset="0" stop-color="#000" stop-opacity="0" />
              <stop offset="0.25" stop-color="#000" stop-opacity="0.06" />
              <stop offset="1" stop-color="#000" stop-opacity="0.6" />
            </radialGradient>
          </defs>
          <rect width="2526" height="410" fill="#000" />
          <rect x="4" y="4" width="2518" height="402" fill="#393939" />
          <rect v-for="(f, i) in frames" :key="'f' + i" class="frame" :x="f[0] + 0.5" :y="f[1] + 0.5" :width="f[2]" :height="f[3]" />
          <rect v-for="(t, i) in tiles" :key="i" class="tile" :x="t.x" :y="t.y" :width="t.w" :height="t.h" :fill="'url(#' + t.c + ')'" />
          <text v-for="l in labels" :key="l[0] + l[1]" class="label" :x="l[1]" :y="l[2]"><tspan v-for="(part, i) in labelParts(l[0])" :key="i" :class="{ big: i % 2 }">{{ part }}</tspan></text>
        </svg>
      </div>
    </main>
  </div>
</template>

<style>
html,
body {
  margin: 0;
  background: #fff;
}

.zh {
  font-size: 25px;
  line-height: 1;
}
</style>

<style scoped>
.window {
  box-sizing: border-box;
  display: flex;
  flex-direction: column;
  min-height: 100vh;
  padding: 0 5px 5px 4px;
  border: 1px solid #bdbdbd;
  border-top-width: 2px;
  border-radius: 12px;
  background: #f2f2f2;
  color: #000;
  font-family: "Open Sans", "Noto Sans CJK SC", sans-serif;
  font-size: 22px;
  overflow: hidden;
}

.defs {
  position: absolute;
  width: 0;
  height: 0;
}

button {
  margin: 0;
  padding: 0;
  border: 0;
  background: none;
  color: inherit;
  font: inherit;
}

/* title bar */
.titlebar {
  box-sizing: border-box;
  display: flex;
  align-items: center;
  height: 60px;
  padding-top: 3px;
}

.app-icon {
  width: 34px;
  height: 32px;
}

.title {
  flex: 1;
  margin-left: 5px;
  font-size: 23px;
  white-space: pre;
}

.controls {
  display: flex;
}

.controls button {
  width: 92px;
  height: 56px;
}

.controls button:last-child {
  margin-right: -5px;
}

.controls svg {
  width: 22px;
  height: 22px;
  fill: none;
  stroke: #111;
  stroke-width: 2;
}

.menubar {
  display: flex;
  gap: 14px;
  height: 39px;
  padding: 2px 5px 0;
  margin: 0 -5px;
  padding-left: 11px;
  background: #f5f5f5;
}

.menubar button {
  font-size: 24px;
}

/* toolbar */
.toolbar {
  display: grid;
  grid-template-columns: 734px 1022px 1fr;
  border: 1px solid #c8c8c8;
  margin-right: -1px;
}

.panel {
  box-sizing: border-box;
  height: 165px;
  background: linear-gradient(#fff, #ecf0f7 50%, #d8e4ee);
}

.panel + .panel {
  border-left: 2px solid #c8c8c8;
}

.scan-panel {
  display: flex;
  flex-direction: column;
  padding: 11px 7px 0 12px;
}

.scan-row {
  display: flex;
  align-items: center;
}

.scan-row label {
  width: 148px;
  font-size: 25px;
}

.drive-box {
  box-sizing: border-box;
  display: flex;
  flex: 1;
  align-items: center;
  height: 40px;
  margin-right: 12px;
  margin-bottom: 6px;
  padding-right: 9px;
  border: 1px solid #dadada;
  border-bottom-color: #bbb;
  border-radius: 2px;
  background: #fff;
}

.drive-box select {
  flex: 1;
  height: 38px;
  padding: 0 4px;
  border: 0;
  background: none;
  color: #000;
  font-family: inherit;
  font-size: 24px;
  appearance: none;
}

.drive-box svg {
  width: 18px;
  height: 10px;
  fill: none;
  stroke: #777;
  stroke-width: 2;
}

.scan {
  width: 136px;
  height: 50px;
  border: 1px solid #b8b8b8;
  border-radius: 5px;
  background: #fdfdfd;
  font-size: 25px;
}

.status-row {
  display: flex;
  align-items: center;
  justify-content: space-between;
  height: 48px;
  margin-top: 9px;
}

.status-row label {
  padding-top: 6px;
  font-size: 23px;
}

.filter {
  align-self: flex-start;
  padding-top: 3px;
  margin-right: 8px;
}

.filter svg {
  display: block;
  width: 30px;
  height: 28px;
  fill: none;
  stroke: #111;
  stroke-width: 3;
}

progress {
  width: 100%;
  height: 30px;
  border: 1px solid #57b46a;
  box-sizing: border-box;
  background: #70c680;
  appearance: none;
}

progress::-webkit-progress-bar {
  background: #70c680;
}

progress::-webkit-progress-value {
  background: #70c680;
}

.info-panel {
  display: grid;
  grid-template-columns: 150px 219px 107px 160px 196px;
  grid-template-rows: repeat(4, 38px);
  align-items: center;
  padding: 4px 0 0 11px;
  white-space: nowrap;
}

.info-panel span {
  font-size: 25px;
}

.info-panel b {
  font-size: 24px;
}

.info-panel b:nth-child(5n + 2),
.info-panel b:nth-child(5n) {
  text-align: right;
}

.info-panel b:nth-child(5n + 3) {
  margin-left: 18px;
}

.info-panel span:nth-child(5n + 4) {
  margin-left: 36px;
}

.about-panel {
  display: flex;
  gap: 10px;
  padding: 6px 9px;
}

.logo {
  width: 128px;
  height: 122px;
}

.about-panel h1 {
  margin: 10px 0 0;
  font-size: 29px;
  line-height: 42px;
}

.about-panel p,
.about-panel a {
  display: block;
  margin: 0;
  color: #000;
  font-size: 21px;
  line-height: 32px;
  text-decoration: none;
}

/* tabs */
.tabs {
  display: flex;
  padding: 1px 5px 0;
}

.tabs button {
  box-sizing: border-box;
  min-width: 101px;
  height: 46px;
  padding: 2px 12px 0;
  border: 1px solid transparent;
  color: #333;
  font-size: 25px;
  line-height: 42px;
}

.tabs .active {
  margin-bottom: -1px;
  border-color: #cfcfcf;
  border-bottom-color: #f9f9f9;
  border-radius: 6px 6px 0 0;
  background: #f9f9f9;
  color: #000;
  z-index: 1;
}

.page {
  flex: 1;
  display: flex;
  padding: 6px 7px 7px 8px;
  border: 1px solid #d0d0d0;
  background: #f9f9f9;
}

.page-inner {
  flex: 1;
  min-width: 0;
  background: #f2f2f2;
}

/* tables */
.tables {
  display: grid;
  grid-template-columns: 1542fr 977fr;
  gap: 7px;
}

.pane {
  min-width: 0;
  border: 1px solid #d6d6d6;
  border-bottom-color: #c4c4c4;
  background: #fff;
  overflow: hidden;
}

table {
  width: 100%;
  border-spacing: 0;
  table-layout: fixed;
}

.w-name { width: 454px; }
.w-pct { width: 162px; }
.w-size { width: 180px; }
.w-num { width: 140px; }
.w-color { width: 51px; }
.w-ext { width: 139px; }
.w-type { width: 203px; }
.w-share { width: 118px; }
.w-tsize { width: 148px; }
.w-talloc { width: 152px; }
.w-tfiles { width: 124px; }

th {
  box-sizing: border-box;
  height: 39px;
  padding: 2px 5px 0;
  border-right: 1px solid #c4c4c4;
  border-bottom: 1px solid #c4c4c4;
  background: #f9f9f9;
  font-size: 25px;
  font-weight: 400;
  line-height: 34px;
  text-align: right;
  white-space: nowrap;
}

th:last-child {
  border-right: 0;
}

th.left {
  text-align: left;
}

.tight {
  padding-left: 6px;
}

th.sorted {
  padding-right: 20px;
}

th svg {
  width: 18px;
  height: 10px;
  margin-left: 7px;
  fill: #858585;
  vertical-align: 5px;
}

td {
  box-sizing: border-box;
  height: 39px;
  padding: 0 9px;
  border-right: 1px dotted #ececec;
  line-height: 36px;
  text-align: right;
  white-space: nowrap;
}

td.sorted {
  background: #eee;
}

.filler td {
  height: 22px;
}

.date {
  padding-left: 20px;
  padding-right: 0;
  border-right: 0;
  font-size: 23px;
  text-align: left;
}

.name,
.ext {
  padding: 0;
}

.node {
  display: flex;
  align-items: center;
  height: 39px;
}

.tree .node {
  padding-left: 52px;
  font-size: 23px;
}

.tree .root {
  gap: 5px;
  padding-left: 16px;
}

.hidden {
  color: #707070;
}

.branch {
  display: block;
  width: 38px;
  height: 39px;
  margin-right: 2px;
}

.root .branch {
  margin-right: -1px;
}

.guide {
  stroke: #8a8a8a;
  stroke-dasharray: 1 1;
}

.box {
  fill: #fff;
  stroke: #bdbdbd;
  stroke-width: 2;
}

.sign {
  stroke: #222;
  stroke-width: 2;
}

.drive-icon {
  width: 34px;
  height: 22px;
}

.folder-icon {
  display: grid;
  align-items: center;
  width: 38px;
  margin-right: 3px;
  color: #33260a;
}

.folder-icon svg {
  grid-area: 1 / 1;
}

.hidden .folder-icon {
  color: #a79a7c;
}

.folder {
  width: 38px;
  height: 32px;
}

.gear {
  width: 22px;
  height: 22px;
  margin-left: 4px;
  color: #8a8568;
}

.pct {
  padding: 0 1px 0 26px;
}

.share {
  padding: 0;
}

.meter {
  box-sizing: border-box;
  display: grid;
  height: 37px;
  border: 1px solid #ddd;
}

.meter i,
.meter span {
  grid-area: 1 / 1;
}

.meter i {
  background: #7b90ff;
}

.types .meter i {
  background: #9fa2ff;
}

.meter.full {
  margin-left: -12px;
}

.meter.full i {
  background: #8c98ff;
}

.meter span {
  padding-right: 9px;
}

/* file types */
.types-pane {
  contain: size;
  display: grid;
  grid-template-columns: 1fr;
}

.types-pane > * {
  grid-area: 1 / 1;
}

.types {
  align-self: start;
}

.swatch {
  padding: 1px 8px 1px 15px;
  border-right: 0;
}

.swatch div {
  height: 37px;
  box-shadow: inset 0 -6px 12px rgba(0, 0, 0, 0.2);
}

.c-o { background: #e27614; }
.c-y { background: #c9cd04; }
.c-g { background: #1fa72c; }
.c-p { background: #9c38ee; }
.c-c { background: #c1376e; }
.c-b { background: #149bff; }
.c-d { background: #7773ff; }
.c-m { background: #ec2ad9; }
.c-r { background: #ff1212; }
.c-t { background: #18e2b2; }
.c-l { background: #6e9727; }
.c-n { background: #8a5518; }
.c-k { background: #606060; }

.ext .node {
  padding-left: 19px;
}

.type-icon {
  display: flex;
  justify-content: center;
  width: 40px;
  margin-right: 2px;
}

.sheet {
  width: 26px;
  height: 35px;
}

.wide {
  width: 37px;
  height: 36px;
}

.script {
  width: 33px;
  height: 37px;
}

.type {
  padding: 0 9px 0 20px;
  text-align: left;
}

.type div {
  overflow: hidden;
}

.types .sorted + td,
.gutter {
  border-right: 0;
}

/* scroll bars */
.hscroll {
  display: flex;
  align-items: center;
  gap: 14px;
  height: 34px;
  padding: 0 11px;
  background: #f2f2f2;
}

.hscroll svg {
  width: 12px;
  height: 16px;
  fill: #858585;
}

.track {
  flex: 1;
  height: 4px;
  padding-bottom: 1px;
}

.track i {
  display: block;
  width: 85%;
  height: 4px;
  border-radius: 2px;
  background: #858585;
}

.vscroll {
  box-sizing: border-box;
  display: flex;
  flex-direction: column;
  align-items: center;
  justify-self: end;
  width: 34px;
  margin-top: 39px;
  padding: 12px 0 9px;
  background: #f2f2f2;
  z-index: 1;
}

.vscroll svg {
  width: 16px;
  height: 12px;
  fill: #858585;
}

.vscroll i {
  flex: none;
  width: 4px;
  height: 11px;
  margin: 13px 0 auto;
  border-radius: 2px;
  background: #858585;
}

/* treemap */
.path {
  margin: 0;
  padding: 13px 0 1px;
  line-height: 30px;
  text-align: center;
}

.treemap {
  display: block;
  width: 100%;
  height: auto;
}

.frame {
  fill: none;
  stroke: #434343;
}

.tile {
  stroke: #000;
  stroke-opacity: 0.3;
  stroke-width: 0.8;
}

.label {
  fill: #e2e2e2;
  font-size: 18px;
  white-space: pre;
}

.big {
  font-size: 20px;
}
</style>
